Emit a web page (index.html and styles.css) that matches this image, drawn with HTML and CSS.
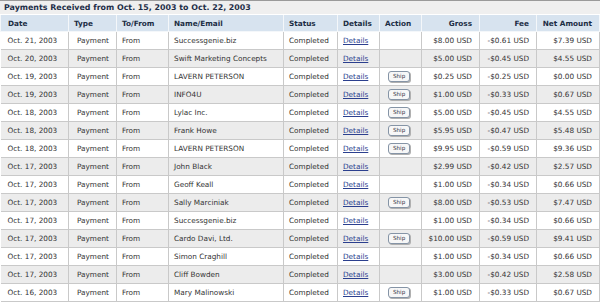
FILE: index.html
```html
<!DOCTYPE html>
<html>
<head>
<meta charset="utf-8">
<link rel="stylesheet" href="styles.css">
</head>
<body>
<div class="title">Payments Received from Oct. 15, 2003 to Oct. 22, 2003</div>
<table class="grid">
<colgroup>
<col class="c-date"><col class="c-type"><col class="c-to"><col class="c-name"><col class="c-status"><col class="c-det"><col class="c-act"><col class="c-gross"><col class="c-fee"><col class="c-net">
</colgroup>
<thead>
<tr><th>Date</th><th>Type</th><th>To/From</th><th>Name/Email</th><th>Status</th><th>Details</th><th>Action</th><th class="num">Gross</th><th class="num">Fee</th><th class="num">Net Amount</th></tr>
</thead>
<tbody>
<tr><td>Oct. 21, 2003</td><td class="type">Payment</td><td>From</td><td>Successgenie.biz</td><td>Completed</td><td><a href="#">Details</a></td><td class="act"></td><td class="num">$8.00 USD</td><td class="num">-$0.61 USD</td><td class="num">$7.39 USD</td></tr>
<tr><td>Oct. 20, 2003</td><td class="type">Payment</td><td>From</td><td>Swift Marketing Concepts</td><td>Completed</td><td><a href="#">Details</a></td><td class="act"></td><td class="num">$5.00 USD</td><td class="num">-$0.45 USD</td><td class="num">$4.55 USD</td></tr>
<tr><td>Oct. 19, 2003</td><td class="type">Payment</td><td>From</td><td>LAVERN PETERSON</td><td>Completed</td><td><a href="#">Details</a></td><td class="act"><span class="ship">Ship</span></td><td class="num">$0.25 USD</td><td class="num">-$0.25 USD</td><td class="num">$0.00 USD</td></tr>
<tr><td>Oct. 19, 2003</td><td class="type">Payment</td><td>From</td><td>INFO4U</td><td>Completed</td><td><a href="#">Details</a></td><td class="act"><span class="ship">Ship</span></td><td class="num">$1.00 USD</td><td class="num">-$0.33 USD</td><td class="num">$0.67 USD</td></tr>
<tr><td>Oct. 18, 2003</td><td class="type">Payment</td><td>From</td><td>Lylac Inc.</td><td>Completed</td><td><a href="#">Details</a></td><td class="act"><span class="ship">Ship</span></td><td class="num">$5.00 USD</td><td class="num">-$0.45 USD</td><td class="num">$4.55 USD</td></tr>
<tr><td>Oct. 18, 2003</td><td class="type">Payment</td><td>From</td><td>Frank Howe</td><td>Completed</td><td><a href="#">Details</a></td><td class="act"><span class="ship">Ship</span></td><td class="num">$5.95 USD</td><td class="num">-$0.47 USD</td><td class="num">$5.48 USD</td></tr>
<tr><td>Oct. 18, 2003</td><td class="type">Payment</td><td>From</td><td>LAVERN PETERSON</td><td>Completed</td><td><a href="#">Details</a></td><td class="act"><span class="ship">Ship</span></td><td class="num">$9.95 USD</td><td class="num">-$0.59 USD</td><td class="num">$9.36 USD</td></tr>
<tr><td>Oct. 17, 2003</td><td class="type">Payment</td><td>From</td><td>John Black</td><td>Completed</td><td><a href="#">Details</a></td><td class="act"></td><td class="num">$2.99 USD</td><td class="num">-$0.42 USD</td><td class="num">$2.57 USD</td></tr>
<tr><td>Oct. 17, 2003</td><td class="type">Payment</td><td>From</td><td>Geoff Keall</td><td>Completed</td><td><a href="#">Details</a></td><td class="act"></td><td class="num">$1.00 USD</td><td class="num">-$0.34 USD</td><td class="num">$0.66 USD</td></tr>
<tr><td>Oct. 17, 2003</td><td class="type">Payment</td><td>From</td><td>Sally Marciniak</td><td>Completed</td><td><a href="#">Details</a></td><td class="act"><span class="ship">Ship</span></td><td class="num">$8.00 USD</td><td class="num">-$0.53 USD</td><td class="num">$7.47 USD</td></tr>
<tr><td>Oct. 17, 2003</td><td class="type">Payment</td><td>From</td><td>Successgenie.biz</td><td>Completed</td><td><a href="#">Details</a></td><td class="act"></td><td class="num">$1.00 USD</td><td class="num">-$0.34 USD</td><td class="num">$0.66 USD</td></tr>
<tr><td>Oct. 17, 2003</td><td class="type">Payment</td><td>From</td><td>Cardo Davi, Ltd.</td><td>Completed</td><td><a href="#">Details</a></td><td class="act"><span class="ship">Ship</span></td><td class="num">$10.00 USD</td><td class="num">-$0.59 USD</td><td class="num">$9.41 USD</td></tr>
<tr><td>Oct. 17, 2003</td><td class="type">Payment</td><td>From</td><td>Simon Craghill</td><td>Completed</td><td><a href="#">Details</a></td><td class="act"></td><td class="num">$1.00 USD</td><td class="num">-$0.34 USD</td><td class="num">$0.66 USD</td></tr>
<tr><td>Oct. 17, 2003</td><td class="type">Payment</td><td>From</td><td>Cliff Bowden</td><td>Completed</td><td><a href="#">Details</a></td><td class="act"></td><td class="num">$3.00 USD</td><td class="num">-$0.42 USD</td><td class="num">$2.58 USD</td></tr>
<tr><td>Oct. 16, 2003</td><td class="type">Payment</td><td>From</td><td>Mary Malinowski</td><td>Completed</td><td><a href="#">Details</a></td><td class="act"><span class="ship">Ship</span></td><td class="num">$1.00 USD</td><td class="num">-$0.33 USD</td><td class="num">$0.67 USD</td></tr>
</tbody>
</table>
</body>
</html>
```

FILE: styles.css
```css
html, body {
  margin: 0;
  padding: 0;
  background: #ffffff;
}
body {
  font-family: "DejaVu Sans", Verdana, sans-serif;
  font-size: 7.3px;
  color: #333333;
  width: 600px;
  overflow: hidden;
}
.title {
  height: 14px;
  box-sizing: border-box;
  border-top: 1px solid #9a9a9a;
  background: #efefef;
  color: #1e2e48;
  font-weight: bold;
  font-size: 7.9px;
  line-height: 13px;
  padding-left: 4px;
}
.grid {
  width: 599px;
  table-layout: fixed;
  border-collapse: collapse;
  margin-top: 1px;
}
.c-date { width: 68px; }
.c-type { width: 48px; }
.c-to { width: 52px; }
.c-name { width: 115px; }
.c-status { width: 54px; }
.c-det { width: 42px; }
.c-act { width: 42px; }
.c-gross { width: 58px; }
.c-fee { width: 57px; }
.c-net { width: 63px; }
.grid th {
  height: 16px;
  background: #d7e3ef;
  color: #1c2d44;
  font-weight: bold;
  text-align: left;
  padding: 0 5px;
  border: 1px solid #f4f7fa;
  border-top: 0;
  white-space: nowrap;
}
.grid th:first-child { padding-left: 7px; }
.grid td {
  height: 17px;
  padding: 0 5px;
  border: 1px solid #c9c9c9;
  white-space: nowrap;
  overflow: hidden;
}
.grid td:first-child { padding-left: 7px; border-left: 0; }
.grid tbody tr:nth-child(even) td { background: #ececec; }
.grid td.type { padding-left: 8px; }
.grid td.act { padding-left: 8px; }
.grid .num { text-align: right; padding-right: 7px; }
.grid a {
  color: #2b3f8e;
  text-decoration: underline;
}
.ship {
  display: inline-block;
  height: 9px;
  line-height: 9px;
  padding: 0 4px;
  font-size: 5.6px;
  color: #334;
  background: #f7f7f7;
  border: 1px solid #8594a6;
  border-radius: 3px;
  box-shadow: 1px 1px 0 #b0b0b0;
  vertical-align: middle;
}
```
